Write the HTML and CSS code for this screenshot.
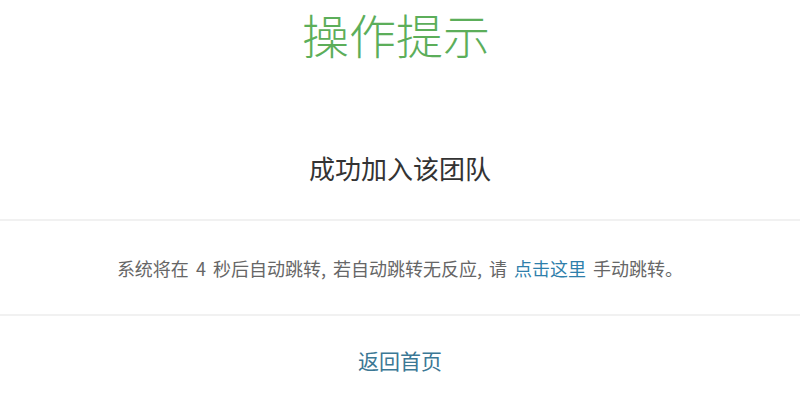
FILE: index.html
```html
<!DOCTYPE html>
<html lang="zh-CN">
<head>
<meta charset="utf-8">
<title>操作提示</title>
<link rel="stylesheet" href="styles.css">
</head>
<body>
<div class="page">
  <h1 class="title">操作提示</h1>
  <div class="result">成功加入该团队</div>
  <div class="notice">系统将在 <span class="num">4</span> 秒后自动跳转, 若自动跳转无反应, 请 <a class="here" href="#">点击这里</a> 手动跳转。</div>
  <div class="back"><a class="back-link" href="#">返回首页</a></div>
</div>
</body>
</html>
```
FILE: styles.css
```css
html, body {
  margin: 0;
  padding: 0;
  background: #ffffff;
}
body {
  font-family: "Noto Sans CJK SC", "Noto Sans", sans-serif;
  color: #333333;
}
.page {
  display: flex;
  flex-direction: column;
  align-items: stretch;
}
.title {
  margin: 0;
  padding: 0 8px 0 0;
  text-align: center;
  font-size: 47px;
  font-weight: 300;
  line-height: 68px;
  color: #5cae5a;
}
.result {
  padding: 82px 0 33px;
  text-align: center;
  font-size: 26px;
  line-height: 36px;
  color: #333333;
  border-bottom: 2px solid #f1f1f1;
}
.notice {
  padding: 35px 0 34px;
  text-align: center;
  font-size: 18px;
  line-height: 24px;
  word-spacing: 3px;
  color: #666666;
  border-bottom: 2px solid #f1f1f1;
}
.here {
  color: #2f7fab;
  text-decoration: none;
}
.back {
  padding-top: 29px;
  text-align: center;
  font-size: 21px;
  line-height: 30px;
}
.back-link {
  color: #3b7895;
  text-decoration: none;
}
```
